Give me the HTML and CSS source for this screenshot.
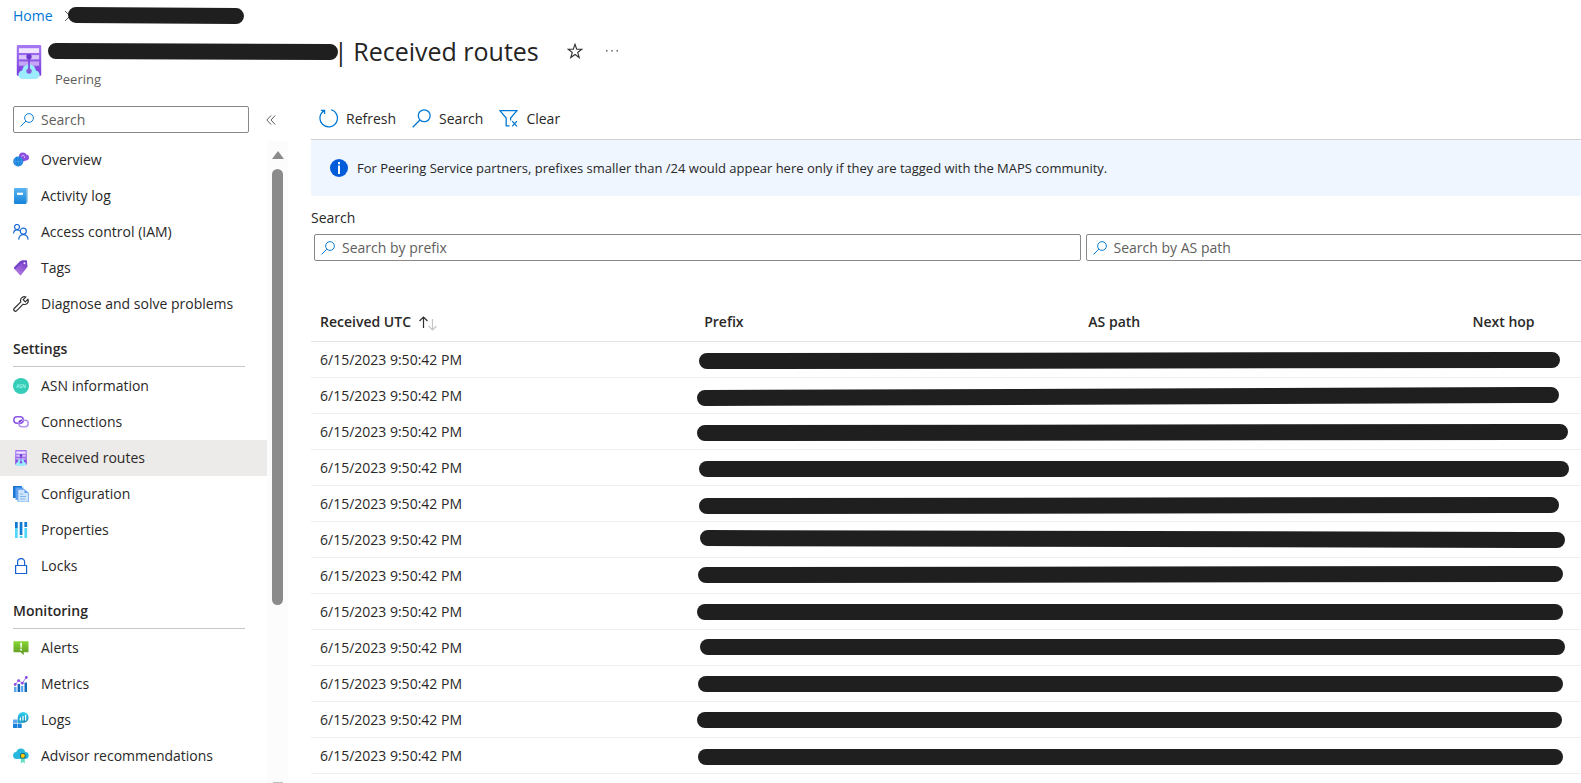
FILE: index.html
```html
<!DOCTYPE html>
<html lang="en">
<head>
<meta charset="utf-8">
<meta name="viewport" content="width=device-width, initial-scale=1">
<title>Received routes</title>
<link rel="stylesheet" href="styles.css">
</head>
<body>
<svg class="defs" aria-hidden="true">
  <defs>
    <linearGradient id="violet" x1="0" y1="0" x2="0" y2="1"><stop offset="0" stop-color="#a67af4"/><stop offset="1" stop-color="#773adc"/></linearGradient>
    <linearGradient id="sky" x1="0" y1="0" x2="0" y2="1"><stop offset="0" stop-color="#5ab4f0"/><stop offset="1" stop-color="#1583d8"/></linearGradient>
    <linearGradient id="tag" x1="1" y1="0" x2="0.3" y2="1"><stop offset="0" stop-color="#6a35c4"/><stop offset="1" stop-color="#b57be0"/></linearGradient>
    <linearGradient id="green" x1="0" y1="0" x2="0" y2="1"><stop offset="0" stop-color="#86d633"/><stop offset="1" stop-color="#5e9624"/></linearGradient>
    <linearGradient id="cyan" x1="0" y1="0" x2="0" y2="1"><stop offset="0" stop-color="#32d4f5"/><stop offset="1" stop-color="#198ab3"/></linearGradient>
    <symbol id="magnifier" viewBox="0 0 16 16"><g fill="none" stroke="#0078d4" stroke-width="1.1"><circle cx="10.3" cy="5.7" r="5"/><path d="M6.700 9.300.6 15.400"/></g></symbol>
    <symbol id="peering" viewBox="0 0 24 32">
      <rect x="0.5" y="0" width="23" height="29" rx="1" fill="url(#violet)"/>
      <rect x="2.5" y="3" width="19" height="4.5" fill="#f0e4ff"/><rect x="2.5" y="9.5" width="19" height="4" fill="#d9c4fa"/><rect x="2.5" y="15.5" width="19" height="4" fill="#c5a6f5"/>
      <g fill="#9cebff"><circle cx="12" cy="24.500" r="6.500"/><circle cx="6" cy="28" r="4"/><circle cx="18" cy="28" r="4"/><rect x="6" y="26" width="12" height="6"/></g>
      <path d="M12 11v13" stroke="#773adc" stroke-width="1.500"/><circle cx="12" cy="11" r="2.500" fill="#6b35c9"/><circle cx="12" cy="24.500" r="2.500" fill="#8458d8"/>
    </symbol>
  </defs>
</svg>
<div class="page">
  <header class="top">
    <nav class="breadcrumb" aria-label="Breadcrumb">
      <a href="#">Home</a>
      <svg class="crumb-mark" aria-hidden="true"><path d="m1 5 5 5-5 5" fill="none" stroke="#605e5c"/><line x1="12" y1="9" x2="172" y2="10"/></svg>
    </nav>
    <div class="title-row">
      <svg class="title-icon" aria-hidden="true"><use href="#peering"/></svg>
      <div class="title-text">
        <div class="title-line">
          <svg class="name-mark" aria-hidden="true"><line x1="8" y1="18" x2="282" y2="19"/></svg>
          <h1><span class="bar">|</span> Received routes</h1>
          <button class="plain star" type="button" aria-label="Add to favorites"><svg viewBox="0 0 16 16"><path d="m8 1.300 1.700 5h5.100l-4.100 3.200 1.500 5L8 11.500l-4.200 3 1.500-5L1.200 6.300h5.100z" fill="none" stroke="#323130" stroke-width="1.100"/></svg></button>
          <button class="plain more" type="button" aria-label="More"><svg viewBox="0 0 14 4"><path d="M1 1h1.500v1.500H1zM6.200 1h1.500v1.500H6.200zM11.500 1H13v1.500h-1.500z" fill="#605e5c"/></svg></button>
        </div>
        <p class="subtitle">Peering</p>
      </div>
    </div>
  </header>

  <div class="body">
    <aside class="side">
      <div class="side-search">
        <div class="field"><svg aria-hidden="true"><use href="#magnifier"/></svg><input type="text" aria-label="Search menu" placeholder="Search"></div>
        <button class="plain collapse" type="button" aria-label="Collapse menu"><svg viewBox="0 0 10 10"><path d="M5 .5.800 5 5 9.500M9.200.5 5 5l4.200 4.500" fill="none" stroke="#605e5c"/></svg></button>
      </div>
      <div class="scroll-area">
        <nav class="menu" aria-label="Resource menu">
          <a href="#"><svg viewBox="0 0 16 16"><g fill="#8c4fe0"><circle cx="9.800" cy="4.200" r="3.800"/><circle cx="13" cy="5.500" r="3"/><circle cx="10" cy="6.500" r="3"/></g><path d="M8.500 4.500c2-2.500 3.500 0 3 1.500" fill="none" stroke="#e0ccff"/><circle cx="5.200" cy="9.500" r="5" fill="#1a82dc"/><path d="M.5 9.500h9.500M5.200 4.700v9.600M2.300 6c-1 3 0 6 1 7.500M8 6c1 3 0 6-1 7.500" stroke="#4da2ea" stroke-width=".6" fill="none"/></svg>Overview</a>
          <a href="#"><svg viewBox="0 0 16 16"><path d="M2.500 0H15v14.500H13z" fill="#a8cfe8"/><rect x="1" width="12.500" height="16" rx="1" fill="url(#sky)"/><rect x="4" y="4.700" width="6" height="2.200" fill="#fff"/></svg>Activity log</a>
          <a href="#"><svg viewBox="0 0 16 16"><g fill="none" stroke="#1b6ad6" stroke-width="1.200"><circle cx="4" cy="3" r="2.500"/><circle cx="10.300" cy="7.200" r="3"/><path d="M.6 9.500C.6 7 2 5.800 4 5.800c1 0 2 .3 2.800 1M5.700 15.600c.3-3 2-5 4.600-5s4.500 2 4.800 5"/></g></svg>Access control (IAM)</a>
          <a href="#"><svg viewBox="0 0 16 16"><path d="M9 .4 13.800.2l.7 6.500-7 9L1.200 8.800z" fill="url(#tag)"/><path d="M7.200 1 .9 7.600l1 2L11 .3z" fill="#7341cc"/><circle cx="11.500" cy="3.200" r="1" fill="#efe3ff"/></svg>Tags</a>
          <a href="#"><svg viewBox="0 0 16 16"><path d="M14.900 3.200 12.300 5.800l-2.100-2.100L12.800 1C10.500 0 7.700 1.500 7.500 4.200c0 .7.100 1.200.3 1.700L1.200 12.500c-1.400 1.500.8 3.700 2.300 2.300l6.600-6.600c3.100 1.200 6.200-1.800 4.800-5z" fill="none" stroke="#323130" stroke-width="1.200"/></svg>Diagnose and solve problems</a>
          <h2>Settings</h2>
          <a href="#"><svg viewBox="0 0 16 16"><circle cx="8" cy="8" r="8" fill="#35cdb8"/><text class="asn" x="8" y="10" text-anchor="middle">ASN</text></svg>ASN information</a>
          <a href="#"><svg viewBox="0 0 16 16"><g fill="none" stroke-width="1.500"><rect x=".8" y="2.800" width="9.500" height="6.400" rx="3.200" stroke="#8c55e8"/><rect x="5.800" y="6.300" width="9.400" height="6.400" rx="3.200" stroke="#b594f2"/><path d="M6 8.500c.5-1.300 1.500-2.100 3-2.200" stroke="#773adc"/></g></svg>Connections</a>
          <a href="#" class="current" aria-current="page"><svg><use href="#peering"/></svg>Received routes</a>
          <a href="#"><svg viewBox="0 0 16 16"><path d="M0 0h9v12H0z" fill="#1a78d4"/><path d="M2.500 1.500h8V14h-8z" fill="#5ea0ef"/><path d="M5 3.500h6.500L15.500 7v9H5z" fill="#cfe5fb" stroke="#5ea0ef" stroke-width=".7"/><path d="M11.500 3.500V7h4z" fill="#5ea0ef"/><path d="M7 8h3M7 10.500h6M7 13h5" stroke="#6aa9ef" stroke-width=".8"/></svg>Configuration</a>
          <a href="#"><svg viewBox="0 0 16 16"><path d="M2 0h2.700v6H2zM6.700 0h2.700v13H6.700zM11.400 0h2.700v5h-2.700z" fill="#0f78d0"/><path d="M2 6h2.700v10H2zM6.700 14h2.700v2H6.700zM11.400 6h2.700v10h-2.700z" fill="#50d9fa"/></svg>Properties</a>
          <a href="#"><svg viewBox="0 0 16 16"><path d="M2.600 7.500h11v8h-11zM4.600 7.500V4c0-4.600 7-4.600 7 0v3.500" fill="none" stroke="#1560d4" stroke-width="1.200"/></svg>Locks</a>
          <h2>Monitoring</h2>
          <a href="#"><svg viewBox="0 0 16 16"><path d="M.5 1.200h15v11h-4.800v3l-3-3H.5z" fill="url(#green)"/><path d="M7.200 2.800h1.800l-.3 5H7.500zM7.200 8.800h1.700v1.700H7.200z" fill="#fff"/></svg>Alerts</a>
          <a href="#"><svg viewBox="0 0 16 16"><path d="M1 11h2.500v5H1zM7.800 10h2.500v6H7.800z" fill="#5ba8f0"/><path d="M4.600 8h2.500v8H4.600zM11.500 6.500H14V16h-2.500z" fill="#1668b8"/><path d="m2.200 8.500 3.500-4 3.500 2.700 4.200-6" fill="none" stroke="#a06ee8"/><g fill="#8b4de0"><circle cx="2.200" cy="8.500" r="1.400"/><circle cx="5.700" cy="4.600" r="1.400"/><circle cx="9.300" cy="7.200" r="1.400"/><circle cx="13.300" cy="1.500" r="1.400"/></g></svg>Metrics</a>
          <a href="#"><svg viewBox="0 0 16 16"><path d="M0 7.500h4v4H0z" fill="#5ea8f0"/><path d="M0 12h4v4H0zM4.500 12h4.200v4H4.500z" fill="#1a7fd8"/><path d="M4.500 7.500h4v4h-4z" fill="#3995e4"/><circle cx="10.200" cy="5.400" r="5.400" fill="url(#cyan)"/><path d="M4.800 5.400h5v5.400h-5z" fill="#27a9cf"/><path d="M7.400 5.500v3M10 4v4.500M12.600 2.800v5.700" stroke="#fff" stroke-width="1.200"/></svg>Logs</a>
          <a href="#"><svg viewBox="0 0 16 16"><g fill="#27b9dd"><circle cx="7.800" cy="5" r="4.600"/><circle cx="3.500" cy="7.500" r="3.400"/><circle cx="12.300" cy="7.500" r="3.400"/><path d="M3.500 7h9v3.900h-9z"/></g><path d="M7.800 9h4v6.500l-2-1.500-2 1.500z" fill="#66e0c0"/><circle cx="9.800" cy="7.800" r="2.900" fill="#165b70"/><circle cx="9.800" cy="7.800" r="2.100" fill="#ffc90e"/></svg>Advisor recommendations</a>
        </nav>
        <div class="scrollbar" aria-hidden="true"><i class="up"></i><i class="thumb"></i><i class="down"></i></div>
      </div>
    </aside>

    <main class="content">
      <div class="toolbar">
        <button class="plain" type="button"><svg viewBox="0 0 18 18"><path d="M11.500.700A8.300 8.300 0 1 1 5 1.500M1.800 1.300H5.300V4.800" fill="none" stroke="#0078d4" stroke-width="1.200"/></svg>Refresh</button>
        <button class="plain" type="button"><svg><use href="#magnifier"/></svg>Search</button>
        <button class="plain" type="button"><svg viewBox="0 0 18 18"><path d="M11 11V8.500l6-7H.8l6 7v7.500H10M12.500 11.500l4.500 5M17 11.500l-4.500 5" fill="none" stroke="#0078d4" stroke-width="1.200"/></svg>Clear</button>
      </div>
      <div class="notice"><svg viewBox="0 0 18 18" aria-hidden="true"><circle cx="9" cy="9" r="9" fill="#015cda"/><path d="M8 3h2v2.200H8zM8 6.500h2V15H8z" fill="#fff"/></svg><span>For Peering Service partners, prefixes smaller than /24 would appear here only if they are tagged with the MAPS community.</span></div>
      <label class="search-label" for="prefix">Search</label>
      <div class="filters">
        <div class="field"><svg aria-hidden="true"><use href="#magnifier"/></svg><input id="prefix" type="text" placeholder="Search by prefix"></div>
        <div class="field"><svg aria-hidden="true"><use href="#magnifier"/></svg><input type="text" aria-label="Search by AS path" placeholder="Search by AS path"></div>
      </div>
      <table class="routes">
        <thead><tr><th scope="col">Received UTC<svg class="sort" viewBox="0 0 20 16" aria-hidden="true"><path d="M5.500 13V2M1.500 6l4-4 4 4" fill="none" stroke="#323130" stroke-width="1.200"/><path d="M14.500 4v11M10.500 11l4 4 4-4" fill="none" stroke="#c8c6c4" stroke-width="1.200"/></svg></th><th scope="col">Prefix</th><th scope="col">AS path</th><th scope="col">Next hop</th></tr></thead>
        <tbody>
          <tr><td>6/15/2023 9:50:42 PM</td><td class="masked" colspan="3"><svg><line x1="12" y1="19" x2="857" y2="18"/></svg></td></tr>
          <tr><td>6/15/2023 9:50:42 PM</td><td class="masked" colspan="3"><svg><line x1="10" y1="20" x2="856" y2="17"/></svg></td></tr>
          <tr><td>6/15/2023 9:50:42 PM</td><td class="masked" colspan="3"><svg><line x1="10" y1="19" x2="865" y2="18"/></svg></td></tr>
          <tr><td>6/15/2023 9:50:42 PM</td><td class="masked" colspan="3"><svg><line x1="12" y1="19" x2="866" y2="19"/></svg></td></tr>
          <tr><td>6/15/2023 9:50:42 PM</td><td class="masked" colspan="3"><svg><line x1="12" y1="20" x2="856" y2="19"/></svg></td></tr>
          <tr><td>6/15/2023 9:50:42 PM</td><td class="masked" colspan="3"><svg><line x1="13" y1="16" x2="862" y2="18"/></svg></td></tr>
          <tr><td>6/15/2023 9:50:42 PM</td><td class="masked" colspan="3"><svg><line x1="11" y1="17" x2="860" y2="16"/></svg></td></tr>
          <tr><td>6/15/2023 9:50:42 PM</td><td class="masked" colspan="3"><svg><line x1="10" y1="18" x2="860" y2="18"/></svg></td></tr>
          <tr><td>6/15/2023 9:50:42 PM</td><td class="masked" colspan="3"><svg><line x1="13" y1="17" x2="862" y2="17"/></svg></td></tr>
          <tr><td>6/15/2023 9:50:42 PM</td><td class="masked" colspan="3"><svg><line x1="11" y1="18" x2="860" y2="18"/></svg></td></tr>
          <tr><td>6/15/2023 9:50:42 PM</td><td class="masked" colspan="3"><svg><line x1="10" y1="18" x2="859" y2="18"/></svg></td></tr>
          <tr><td>6/15/2023 9:50:42 PM</td><td class="masked" colspan="3"><svg><line x1="11" y1="19" x2="860" y2="19"/></svg></td></tr>
        </tbody>
      </table>
    </main>
  </div>
</div>
</body>
</html>
```

FILE: styles.css
```css
* { box-sizing: border-box; }
body {
  margin: 0;
  background: #fff;
  color: #292827;
  font: 14px/20px "Open Sans", "Noto Sans", sans-serif;
}
svg { display: block; flex: none; }
.defs { position: absolute; width: 0; height: 0; }
.page { display: flex; flex-direction: column; height: 100vh; overflow: hidden; }
.plain { display: flex; align-items: center; padding: 0; border: 0; background: none; color: inherit; font: inherit; }

.breadcrumb { display: flex; align-items: center; height: 32px; padding-left: 13px; }
.breadcrumb a { color: #0078d4; text-decoration: none; }
.crumb-mark { width: 190px; height: 20px; margin-left: 11px; }
.crumb-mark line, .name-mark line, .masked line { stroke: #1f1f1f; stroke-width: 16; stroke-linecap: round; }

.title-row { display: flex; padding-left: 16px; }
.title-icon { width: 26px; height: 34px; margin-top: 13px; }
.title-text { margin-left: 6px; }
.title-line { display: flex; align-items: center; height: 38px; }
.name-mark { width: 290px; height: 36px; }
.title-line h1 { margin: 0 0 0 -4px; color: #252423; font-size: 25px; font-weight: 400; line-height: 36px; white-space: nowrap; }
.bar { margin-right: -1px; }
.star { margin-left: 28px; }
.star svg { width: 16px; height: 16px; }
.more { margin-left: 22px; }
.more svg { width: 14px; height: 4px; }
.subtitle { margin: -1px 0 1px 7px; color: #605e5c; font-size: 13px; }

.body { display: flex; flex: 1; min-height: 0; }
.side { display: flex; flex-direction: column; flex: none; width: 288px; margin-right: 23px; padding-top: 16px; }
.side-search { display: flex; align-items: center; gap: 17px; padding-left: 13px; }
.side-search .field { width: 236px; }
.collapse svg { width: 10px; height: 10px; }
.field { display: flex; align-items: center; height: 27px; padding-left: 6px; border: 1px solid #8a8886; border-radius: 2px; }
.field svg { width: 14px; height: 14px; }
.field input { flex: 1; min-width: 0; padding: 0 0 0 7px; border: 0; outline: 0; background: none; color: inherit; font: inherit; }
.field input::placeholder { color: #605e5c; opacity: 1; }

.scroll-area { display: flex; flex: 1; min-height: 0; margin-top: 8px; overflow: hidden; }
.menu { flex: 1; padding-top: 1px; }
.menu a { display: flex; align-items: center; gap: 12px; height: 36px; padding-left: 13px; color: inherit; text-decoration: none; white-space: nowrap; }
.menu a svg { width: 16px; height: 16px; }
.menu a.current { background: #edebe9; }
.menu h2 { height: 45px; margin: 0 22px 1px 13px; padding-top: 17px; border-bottom: 1px solid #c8c6c4; font-size: 14px; font-weight: 600; line-height: 20px; }
.asn { fill: #c8fff5; font: 5px "Open Sans", sans-serif; }
.scrollbar { display: flex; flex: none; flex-direction: column; align-items: center; width: 21px; padding-top: 10px; background: #fcfcfc; }
.up { border: 6px solid transparent; border-top: 0; border-bottom: 8px solid #8b8b8b; }
.thumb { width: 11px; height: 69%; margin-top: 10px; border-radius: 6px; background: #8b8b8b; }
.down { width: 10px; height: 1px; margin-top: auto; background: #c0c0c0; }

.content { flex: 1; min-width: 0; overflow: hidden; }
.toolbar { display: flex; align-items: center; gap: 16px; height: 50px; padding: 8px 0 0 8px; border-bottom: 1px solid #d2d0ce; }
.toolbar button { gap: 8px; }
.toolbar svg { width: 19px; height: 19px; }
.notice { display: flex; align-items: center; gap: 9px; height: 56px; padding-left: 19px; border-radius: 2px; background: #eff6ff; font-size: 13px; white-space: nowrap; }
.notice svg { width: 18px; height: 18px; }
.search-label { display: block; margin-top: 12px; }
.filters { display: flex; gap: 5px; margin-top: 6px; padding-left: 3px; }
.filters .field { flex: 0 0 60.5%; }

.routes { width: 121%; margin-top: 41px; border-collapse: separate; border-spacing: 0; table-layout: fixed; }
.routes th, .routes td { height: 36px; padding: 0 9px; border-bottom: 1px solid #f0efee; text-align: left; white-space: nowrap; }
.routes th { height: 40px; border-color: #e6e4e2; font-weight: 600; }
.routes .masked { padding: 0; }
.masked svg { width: 100%; height: 35px; }
.sort { display: inline-block; width: 20px; height: 16px; margin-left: 7px; vertical-align: middle; }
```
